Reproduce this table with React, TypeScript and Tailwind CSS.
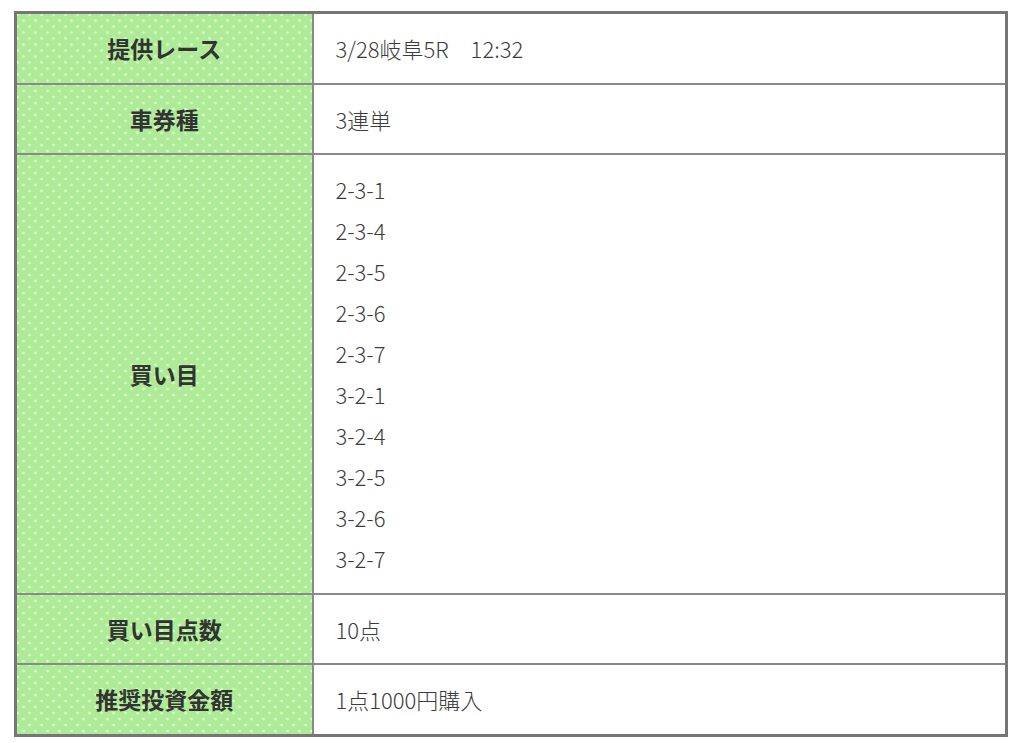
const rows: { label: string; values: string[] }[] = [
  { label: "提供レース", values: ["3/28岐阜5R\u300012:32"] },
  { label: "車券種", values: ["3連単"] },
  {
    label: "買い目",
    values: ["2-3-1", "2-3-4", "2-3-5", "2-3-6", "2-3-7", "3-2-1", "3-2-4", "3-2-5", "3-2-6", "3-2-7"],
  },
  { label: "買い目点数", values: ["10点"] },
  { label: "推奨投資金額", values: ["1点1000円購入"] },
];

export default function App() {
  return (
    <div className="min-h-[743px] bg-white pt-[11px] pl-[14px] font-['Noto_Sans_CJK_JP','Noto_Sans',sans-serif]">
      <table className="w-[994px] border-collapse border-[3px] border-[#767676]">
        <tbody>
          {rows.map((row) => (
            <tr key={row.label}>
              <th className="w-[297px] border-2 border-[#8a8a8a] bg-[#aeeb96] bg-[radial-gradient(rgba(255,255,255,0.6)_1px,transparent_1.8px),radial-gradient(rgba(255,255,255,0.6)_1px,transparent_1.8px)] bg-[length:12px_12px] bg-[position:0_0,6px_6px] text-[23px] font-bold text-[#333]">
                {row.label}
              </th>
              <td className="border-2 border-[#8a8a8a] pl-[22px] pr-[20px] pt-[14px] pb-[13.6px] text-[22px] leading-[41px] font-light text-[#3c3c3c]">
                {row.values.map((v) => (
                  <div key={v} className="whitespace-pre">{v}</div>
                ))}
              </td>
            </tr>
          ))}
        </tbody>
      </table>
    </div>
  );
}
